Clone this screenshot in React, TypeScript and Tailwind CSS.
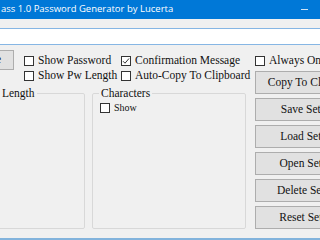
import { PropsWithChildren } from "react";

const serif = "font-['Liberation_Serif',serif]";

function Check({ checked, children, small }: PropsWithChildren<{ checked?: boolean; small?: boolean }>) {
  return (
    <div className={`flex items-center ${small ? "h-[12px] gap-[4px] text-[10px]" : "h-[15px] gap-[4px] text-[11.5px]"}`}>
      <span className="w-[10px] h-[10px] shrink-0 border border-[#333] bg-white flex items-center justify-center">
        {checked && (
          <svg width="8" height="8" viewBox="0 0 8 8">
            <path d="M1 4.2 L3 6.2 L7 1.5" fill="none" stroke="#333" strokeWidth="1" />
          </svg>
        )}
      </span>
      <span className="whitespace-nowrap leading-none">{children}</span>
    </div>
  );
}

function Btn({ children }: PropsWithChildren) {
  return (
    <div className="w-[114px] h-[23px] shrink-0 border border-[#adadad] bg-[#e1e1e1] flex items-center justify-center text-[11.5px] whitespace-nowrap">
      {children}
    </div>
  );
}

function Group({ title, className, children }: PropsWithChildren<{ title: string; className: string }>) {
  return (
    <fieldset className={`h-[143px] shrink-0 border border-[#d8d8d8] rounded-[2px] ${className}`}>
      <legend className="ml-[6px] px-[2px] text-[11.5px] leading-[14px] whitespace-nowrap">{title}</legend>
      {children}
    </fieldset>
  );
}

export default function App() {
  return (
    <div className={`w-[320px] h-[240px] overflow-hidden bg-[#f0f0f0] flex flex-col text-[#111] ${serif}`}>
      {/* title bar */}
      <div className="h-[19px] shrink-0 bg-[#0078d7] flex items-center justify-between text-white font-['Open_Sans',sans-serif] text-[9.5px]">
        <span className="pl-[1px] whitespace-nowrap">ass 1.0 Password Generator by Lucerta</span>
        <span className="w-[7px] h-px bg-[#cfe3f5] mr-[12px]" />
      </div>

      <div className="mt-[9px] h-[17px] shrink-0 border-y border-[#86b6e4] bg-white" />

      <div className="flex-1 flex border-b-2 border-[#82b3dc]">
        {/* left side */}
        <div className="w-[255px] shrink-0 flex flex-col">
          <div className="flex h-[38px]">
            <div className="ml-[-62px] mt-[5px] w-[76px] h-[20px] shrink-0 border border-[#adadad] bg-[#e1e1e1] flex items-center justify-end pr-[12px] text-[11.5px]">
              Generate
            </div>
            <div className="ml-[10px] mt-[8px] w-[97px] shrink-0 flex flex-col">
              <Check>Show Password</Check>
              <Check>Show Pw Length</Check>
            </div>
            <div className="mt-[8px] flex flex-col">
              <Check checked>Confirmation Message</Check>
              <Check>Auto-Copy To Clipboard</Check>
            </div>
          </div>
          <div className="mt-[3px] flex gap-[7px]">
            <Group title="Password Length" className="ml-[-54px] w-[139px]" />
            <Group title="Characters" className="w-[154px]">
              <div className="pl-[7px] pt-[2px]">
                <Check small>Show</Check>
              </div>
            </Group>
          </div>
        </div>

        {/* right side */}
        <div className="shrink-0 flex flex-col">
          <div className="mt-[8px]">
            <Check>Always On Top</Check>
          </div>
          <div className="mt-[3px] flex flex-col gap-[4px]">
            <Btn>Copy To Clipboard</Btn>
            <Btn>Save Settings</Btn>
            <Btn>Load Settings</Btn>
            <Btn>Open Settings</Btn>
            <Btn>Delete Settings</Btn>
            <Btn>Reset Settings</Btn>
          </div>
        </div>
      </div>
    </div>
  );
}
